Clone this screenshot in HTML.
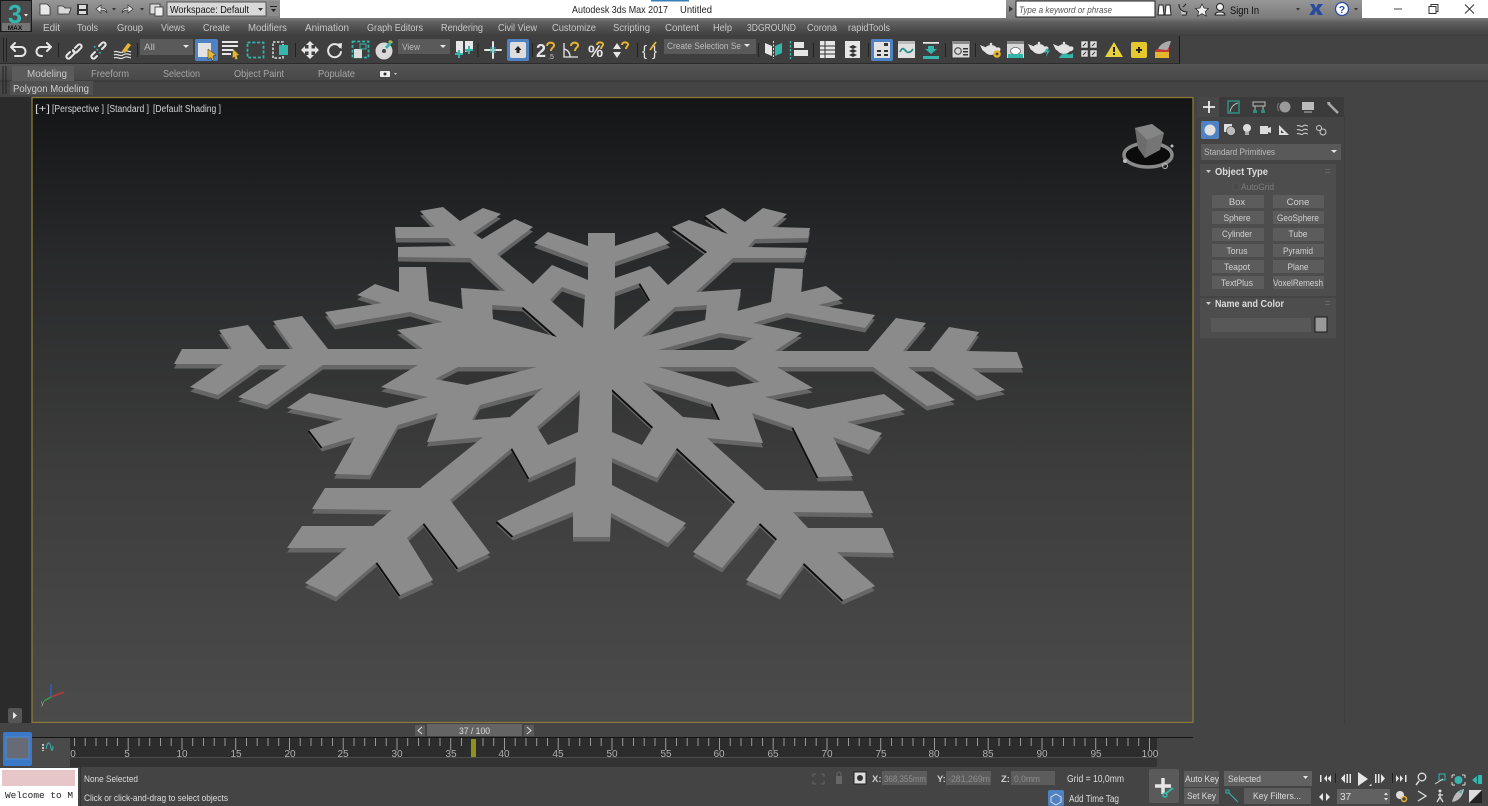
<!DOCTYPE html>
<html><head><meta charset="utf-8"><style>
html,body{margin:0;padding:0;background:#444;width:1488px;height:806px;overflow:hidden}
svg{display:block;position:absolute;left:0;top:0;filter:blur(.3px)}
text{font-family:"Liberation Sans",sans-serif;font-size:10px;fill:#d2d2d2}
.m text{font-size:10.5px;fill:#c8c8c8}
.c text{text-anchor:middle}
.tl text{fill:#b0b0b0}
.t{fill:none;stroke:#e6e6e6;stroke-width:2;stroke-linecap:round;stroke-linejoin:round}
.t2{fill:none;stroke:#e6e6e6;stroke-width:1.3}
.w{fill:#e6e6e6}
.g{fill:#35b5ac}
.y{fill:#e9b530}
.mg{fill:none;stroke:#e9b530;stroke-width:1.900}
</style></head><body>
<svg width="1488" height="806" viewBox="0 0 1488 806">
<defs>
<linearGradient id="vp" x1="0" y1="0" x2="0" y2="1"><stop offset="0" stop-color="#141516"/><stop offset=".25" stop-color="#28292a"/><stop offset=".6" stop-color="#3d3d3d"/><stop offset="1" stop-color="#4b4b4b"/></linearGradient>
<linearGradient id="mn" x1="0" y1="0" x2="0" y2="1"><stop offset="0" stop-color="#7a7a7a"/><stop offset=".25" stop-color="#5e5e5e"/><stop offset="1" stop-color="#3e3e3e"/></linearGradient>
<linearGradient id="tb" x1="0" y1="0" x2="0" y2="1"><stop offset="0" stop-color="#979797"/><stop offset="1" stop-color="#7b7b7b"/></linearGradient>
<linearGradient id="rb" x1="0" y1="0" x2="0" y2="1"><stop offset="0" stop-color="#545454"/><stop offset="1" stop-color="#474747"/></linearGradient>
<path id="sf" fill-rule="evenodd" d="M174,364 182,349 232,349 219,330 248,325 267,349 293,349 273,321 302,316 328,349 423,349 397,330 443,322 410,312 335,325 325,312 382,303 357,295 375,284 399,292 399,267 426,267 429,301 463,309 461,288 505,291 470,258 398,257 398,247 456,246 448,238 396,238 395,227 435,227 420,211 443,207 460,221 483,208 501,214 473,233 482,239 515,219 533,227 497,254 533,284 552,265 588,280 588,263 534,243 548,232 588,246 588,233 615,233 615,246 657,232 670,243 615,262 615,278 650,266 668,285 707,252 672,227 689,220 728,234 705,216 723,208 745,222 763,208 787,214 772,227 810,228 808,238 755,239 748,247 807,248 804,258 733,258 696,292 741,289 737,311 771,302 775,268 803,269 801,292 826,286 843,299 818,305 875,315 865,328 787,313 753,323 802,333 775,351 868,351 896,318 926,323 903,351 930,351 949,327 979,332 966,351 1017,352 1023,368 972,368 1005,390 977,396 933,367 908,367 955,400 927,406 873,367 777,367 813,388 765,397 808,409 884,394 905,410 847,422 882,433 869,450 833,437 853,476 818,477 793,427 752,413 763,443 707,438 765,490 863,491 873,513 793,512 808,528 883,528 894,553 837,552 875,586 843,600 804,563 780,595 746,580 777,539 760,523 722,568 693,552 735,502 677,448 657,478 612,458 612,485 686,523 668,543 611,513 610,537 573,537 573,512 513,536 497,521 575,485 576,457 529,478 512,448 450,500 490,553 458,568 424,523 407,538 433,580 400,595 377,562 336,597 305,583 347,548 287,548 302,526 373,526 392,510 312,509 325,488 420,488 483,437 427,442 438,413 398,425 370,475 334,474 355,437 322,447 309,430 343,419 287,408 309,393 386,408 428,397 381,387 418,365 323,365 267,405 238,397 287,365 260,365 218,395 190,387 223,364Z
M435,379 458,367 537,367 467,385Z M492,305 523,307 557,337 493,319Z M562,287 585,295 583,328 550,300Z M480,405 543,388 510,417 472,420Z M580,390 578,432 548,445 537,427Z M615,292 640,283 650,300 614,330Z M675,307 707,305 705,320 642,337Z M720,333 753,338 733,350 658,350Z M658,367 735,367 760,382 728,387Z M643,382 712,403 720,420 683,417Z M612,389 653,427 642,445 612,432Z"/>
<g id="pot"><ellipse cx="0" cy="0" rx="6.500" ry="5" fill="#e2e2e2"/><path d="M-5-2l-5-2 2 4 4 3zM6-2c4-1 4 3 0 4" fill="#e2e2e2" stroke="#e2e2e2"/><circle cy="-6" r="1.300" fill="#e2e2e2"/></g>
</defs>

<!-- Title bar -->
<rect width="1488" height="18" fill="#fff"/>
<rect x="0" y="18" width="1488" height="18" fill="url(#mn)"/>
<rect x="32" y="0" width="248" height="18" fill="url(#tb)"/>
<rect x="1006" y="0" width="356" height="18" fill="url(#tb)"/>
<rect x=".5" y=".5" width="31" height="31" fill="#4a4a4a" stroke="#1a1a1a"/>
<rect x="2" y="23" width="28" height="8" fill="#757575"/>
<text x="15" y="23" style="font-size:26px;font-weight:bold;fill:#33b8b0" text-anchor="middle" textLength="14" lengthAdjust="spacingAndGlyphs">3</text>
<text x="15" y="30" style="font-size:6.500px;font-weight:bold;fill:#111" text-anchor="middle">MAX</text>
<path d="M24 14h4l-2 2.500z" fill="#eee"/>
<rect x="167" y="2" width="99" height="14" fill="#d8d8d8" stroke="#555"/>
<text x="170" y="13" style="font-size:10.500px;fill:#111" textLength="79" lengthAdjust="spacingAndGlyphs">Workspace: Default</text>
<path d="M258 8l5 0-2.500 3z" fill="#333"/>
<rect x="268" y="1" width="11" height="15" fill="#8c8c8c"/><path d="M270 6h7v1h-7zM271 9h5l-2.500 3z" fill="#222"/>
<path d="M40 4h7l3 3v8H40z" fill="#e8e8e8" stroke="#333" stroke-width=".8"/>
<path d="M58 6h5l2 2h6l-2 6H58z" fill="#d8d8d8" stroke="#333" stroke-width=".8"/>
<path d="M77 4h11v11H77z" fill="#333"/><rect x="79" y="5" width="7" height="4" fill="#ddd"/><rect x="79" y="11" width="7" height="3" fill="#ddd"/>
<path d="M96 9l5-4v3c5 0 6 3 6 5-1-2-3-3-6-3v3z" fill="#e6e6e6" stroke="#333" stroke-width=".7"/>
<path d="M112 8h4l-2 2.500z" fill="#333"/>
<path d="M133 9l-5-4v3c-5 0-6 3-6 5 1-2 3-3 6-3v3z" fill="#e6e6e6" stroke="#333" stroke-width=".7"/>
<path d="M140 8h4l-2 2.500z" fill="#333"/>
<rect x="150" y="4" width="10" height="10" fill="#ddd" stroke="#333" stroke-width=".8"/><rect x="155" y="7" width="8" height="9" fill="#eee" stroke="#333" stroke-width=".8"/>

<text x="572" y="13" style="font-size:10.500px;fill:#222" textLength="96" lengthAdjust="spacingAndGlyphs">Autodesk 3ds Max 2017</text>
<text x="680" y="13" style="font-size:10.500px;fill:#222" textLength="32" lengthAdjust="spacingAndGlyphs">Untitled</text>
<rect x="651" y="0" width="38" height="1.500" fill="#3b7db5"/>

<rect x="1016" y="1" width="139" height="16" fill="#fff" stroke="#222"/>
<path d="M1009 6l4 3-4 3z" fill="#333"/>
<text x="1019" y="13" style="font-size:9.500px;font-style:italic;fill:#555" textLength="93" lengthAdjust="spacingAndGlyphs">Type a keyword or phrase</text>
<path d="M1159 5h4l1 10h-6zM1166 5h4l1 10h-6z" fill="#fff" stroke="#222"/>
<path d="M1179 4c0 5 3 8 8 8l-1 3h-4M1183 7l3-3" fill="#ccc" stroke="#222"/>
<path d="M1202 4l2 4 4.500.5-3.200 3 1 4.500-4.300-2.300-4.300 2.300 1-4.500-3.200-3 4.500-.5z" fill="#eee" stroke="#222" stroke-width=".7"/>
<circle cx="1220" cy="7" r="3.500" fill="#eee" stroke="#222"/><path d="M1215 15c0-4 10-4 10 0z" fill="#eee" stroke="#222"/>
<text x="1230" y="14" style="font-size:11px;fill:#111" textLength="29" lengthAdjust="spacingAndGlyphs">Sign In</text>
<path d="M1296 8h4l-2 2.500z" fill="#333"/>
<path d="M1310 4h4l2 4 2-4h5l-4 5 4 6h-5l-2-4-2 4h-5l4-6z" fill="#274b9e"/>
<circle cx="1342" cy="9" r="6.500" fill="#fff" stroke="#2a4b9e" stroke-width="1.300"/><text x="1342" y="13" text-anchor="middle" style="font-size:10.500px;font-weight:bold;fill:#2a4b9e">?</text>
<path d="M1354 8h4l-2 2.500z" fill="#333"/>
<rect x="1394" y="8.500" width="8" height="1" fill="#444"/>
<path d="M1429 6.500h7v7h-7zM1431 6.500V4.500h7v7h-2" fill="none" stroke="#333"/>
<path d="M1465 4.500l9 9m0-9l-9 9" stroke="#333" fill="none"/>

<!-- Menu -->
<g class="m">
<text x="43" y="31" textLength="17" lengthAdjust="spacingAndGlyphs">Edit</text><text x="77" y="31" textLength="21" lengthAdjust="spacingAndGlyphs">Tools</text><text x="117" y="31" textLength="26" lengthAdjust="spacingAndGlyphs">Group</text><text x="161" y="31" textLength="24" lengthAdjust="spacingAndGlyphs">Views</text><text x="203" y="31" textLength="27" lengthAdjust="spacingAndGlyphs">Create</text><text x="248" y="31" textLength="39" lengthAdjust="spacingAndGlyphs">Modifiers</text><text x="305" y="31" textLength="44" lengthAdjust="spacingAndGlyphs">Animation</text><text x="367" y="31" textLength="56" lengthAdjust="spacingAndGlyphs">Graph Editors</text><text x="441" y="31" textLength="42" lengthAdjust="spacingAndGlyphs">Rendering</text><text x="498" y="31" textLength="39" lengthAdjust="spacingAndGlyphs">Civil View</text><text x="552" y="31" textLength="44" lengthAdjust="spacingAndGlyphs">Customize</text><text x="613" y="31" textLength="37" lengthAdjust="spacingAndGlyphs">Scripting</text><text x="665" y="31" textLength="34" lengthAdjust="spacingAndGlyphs">Content</text><text x="713" y="31" textLength="19" lengthAdjust="spacingAndGlyphs">Help</text><text x="747" y="31" textLength="49" lengthAdjust="spacingAndGlyphs">3DGROUND</text><text x="807" y="31" textLength="30" lengthAdjust="spacingAndGlyphs">Corona</text><text x="848" y="31" textLength="42" lengthAdjust="spacingAndGlyphs">rapidTools</text>
</g>

<!-- Toolbar -->
<rect x="0" y="36" width="1180" height="28" fill="#3f3f3f"/>
<rect x="1180" y="36" width="308" height="28" fill="#434343"/>
<rect x="0" y="63.500" width="1180" height="1" fill="#1a1a1a"/><rect x="1179" y="36" width="1" height="28" fill="#1a1a1a"/>
<rect x="3" y="38" width="1" height="24" fill="#222"/><rect x="6" y="38" width="1" height="24" fill="#222"/>

<path class="t" d="M13 47h8c6 0 6 9 0 9h-6M15 43l-4 4 4 4"/>
<path class="t" d="M49 47h-8c-6 0-6 9 0 9h1M47 43l4 4-4 4"/>
<path d="M58.500 43v14M137.500 43v14M295.500 43v14M478 43v14M532.500 43v14M637.500 43v14M758.500 43v14M813.500 43v14M868.500 43v14M945.500 43v14M975.500 43v14" stroke="#222"/>
<path class="t" d="M70 52l-3 3c-2 2 1 5 3 3l4-4c2-2-1-4-1-4M75 48l3-3c2-2 5 1 3 3l-4 4c-2 2-4-1-4-1" stroke-width="1.700"/>
<path class="t" d="M95 52l-3 3c-2 2 1 5 3 3l2-2M99 46l3-3c2-2 5 1 3 3l-3 3" stroke-width="1.700"/><path d="M94 46l8 9" stroke="#35b5ac" stroke-width="1.500" stroke-dasharray="2 2"/>
<path d="M114 52c3-2 6 2 9 0s5-1 8 0M114 55c3-2 6 2 9 0s5-1 8 0M114 58c3-2 6 2 9 0s5-1 8 0" fill="none" stroke="#ddd" stroke-width="1.200"/><path d="M122 51l6-8 3 2-6 8z" class="y"/>

<rect x="140" y="39" width="53" height="16" fill="#5a5a5a"/><text x="144" y="50" style="fill:#bbb;font-size:9.500px" textLength="11" lengthAdjust="spacingAndGlyphs">All</text><path class="w" d="M183 45h6l-3 3z"/>
<rect x="195" y="39" width="23" height="22" rx="2" fill="#4f82c2"/><rect x="198" y="43" width="13" height="14" fill="#e2e2e2"/><path d="M208 49l8 6-3 1 1 4-2 .5-1-3-3 2z" class="y" stroke="#222" stroke-width=".5"/>
<path d="M222 41h16v2h-16zM222 45h16v2h-16zM222 49h11v2h-11zM222 53h9v2h-9z" class="w"/><path d="M233 49l6 6-2.500.5 1 3.500-2 .5-1-3-2 1.500z" class="y"/>
<rect x="247.500" y="42.500" width="16" height="15" fill="none" stroke="#35b5ac" stroke-width="1.800" stroke-dasharray="3 1.800"/>
<rect x="273" y="42" width="10" height="16" fill="none" stroke="#ddd" stroke-width="1.500" stroke-dasharray="2.500 1.500"/><rect x="279" y="45" width="9" height="10" class="g"/>
<path class="w" d="M310 41l4 4h-2.500v3.500H315V46l4 4-4 4v-2.500h-3.500V55H314l-4 4-4-4h2.500v-3.500H305V54l-4-4 4-4v2.500h3.500V45H306z"/>
<path class="t" d="M340 47a6.500 6.500 0 1 0 1 5"/><path class="w" d="M336 44l6-1-.5 6z"/>
<rect x="352.500" y="41.500" width="16" height="16" fill="none" stroke="#35b5ac" stroke-width="1.800" stroke-dasharray="3 1.800"/><rect x="354" y="49" width="8" height="9" fill="#ddd"/><rect x="360" y="44" width="6" height="5" fill="none" stroke="#35b5ac"/>
<circle cx="384" cy="51" r="8.500" fill="#d9d9d9"/><circle cx="384" cy="51" r="2" fill="#444"/><path d="M385 47l6-7 2 2-6 7z" fill="#35b5ac"/><path d="M388 42l2-2 3 3" class="y"/>
<rect x="398" y="39" width="52" height="15" fill="#5a5a5a"/><text x="402" y="50" style="fill:#bbb;font-size:9.500px" textLength="18" lengthAdjust="spacingAndGlyphs">View</text><path class="w" d="M440 45h6l-3 3z"/>
<path class="w" d="M456 41h7v13l-7-2zM465 41h8v9l-8 2z"/><path d="M459 50v8M455 54h8M469 46v8M465 50h8" stroke="#35b5ac" stroke-width="2"/>
<path class="t" d="M485 50h16M493 42v16" stroke-width="1.800"/><rect x="490" y="47" width="6" height="6" class="g" opacity=".5"/>
<rect x="507" y="39" width="22" height="22" rx="2" fill="#4f82c2"/><rect x="510" y="42" width="16" height="16" rx="2" fill="#ddd"/><path d="M518 46l3.500 4h-2v3h-3v-3h-2z" fill="#222"/>
<text x="536" y="57" style="font-size:18px;font-weight:bold;fill:#e6e6e6">2</text><text x="548" y="59" style="font-size:7px;fill:#ccc">.5</text><path class="mg" d="M547 46c0-5 8-4 7 0-1 2-3 2-3 5"/>
<path class="t2" d="M564 43v14h14M564 49c4 1 6 4 6 8"/><path class="mg" d="M571 46c0-5 8-4 7 0-1 2-3 2-3 5"/>
<text x="588" y="57" style="font-size:17px;font-weight:bold;fill:#e6e6e6">%</text><path class="mg" d="M597 45c0-4 7-3 6 0-1 2-2 2-2 4"/>
<path class="w" d="M613 49l4-6 4 6zM613 52l4 6 4-6z"/><path class="mg" d="M622 45c0-4 7-3 6 0-1 2-2 2-2 4"/>
<text x="642" y="56" style="font-size:15px;fill:#e6e6e6">{</text><text x="652" y="56" style="font-size:15px;fill:#e6e6e6">}</text><path d="M650 50l6-8" stroke="#e9b530" stroke-width="1.800"/>
<rect x="664" y="39" width="92" height="15" fill="#5a5a5a"/><text x="667" y="49" style="fill:#bbb;font-size:9.500px" textLength="74" lengthAdjust="spacingAndGlyphs">Create Selection Se</text><path class="w" d="M744 44h6l-3 3z"/>
<path d="M765 43l7 3v10l-7-3z" class="w"/><path d="M782 43l-7 3v10l7-3z" class="g"/><path d="M773.500 41v18" stroke="#ddd" stroke-dasharray="2 1.500"/>
<path d="M790.500 41v18" stroke="#35b5ac" stroke-width="1.500" stroke-dasharray="2.500 1.500"/><rect x="794" y="42" width="10" height="6" class="w"/><rect x="794" y="50" width="14" height="6" class="w"/>
<rect x="820" y="41" width="15" height="17" fill="#e6e6e6"/><path d="M820 46h15M820 50h15M820 54h15M825 41v17" stroke="#333"/>
<rect x="845" y="41" width="15" height="17" fill="#e6e6e6"/><path d="M849 47l4-2 4 2-4 2zM849 51l4-2 4 2-4 2zM849 55l4-2 4 2-4 2z" fill="#333"/>
<rect x="871" y="39" width="22" height="22" rx="2" fill="#4f82c2"/><rect x="874" y="42" width="16" height="16" fill="#e2e2e2"/><path d="M877 50h4v2h-4zM884 50h4v2h-4zM877 54h4v2h-4zM884 54h4v2h-4zM884 43h4v3h-4z" fill="#333"/>
<rect x="898" y="41" width="17" height="17" fill="#e0e0e0"/><rect x="898" y="41" width="17" height="3" fill="#bbb"/><path d="M900 52c3-7 5-1 7 0s4 0 6-3" fill="none" stroke="#268f88" stroke-width="1.800"/>
<path d="M923 42h16v1.800h-16zM923 56h16v2.500h-16z" class="w"/><path d="M928 46h6v3h3l-6 5-6-5h3z" fill="#35b5ac"/><rect x="923" y="56" width="16" height="3" class="g"/>
<rect x="952" y="41" width="18" height="17" fill="#d8d8d8" stroke="#333"/><rect x="952" y="41" width="18" height="3" fill="#888"/><circle cx="958" cy="51" r="3.300" fill="none" stroke="#333"/><path d="M963 48h5v1.500h-5zM963 51h5v1.500h-5zM963 54h5v1.500h-5z" fill="#333"/>
<use href="#pot" transform="translate(991,50)"/><circle cx="997" cy="54" r="3.800" class="y"/><circle cx="997" cy="54" r="1.400" fill="#444"/>
<rect x="1007" y="41" width="17" height="17" fill="#d8d8d8"/><rect x="1007" y="41" width="17" height="3" fill="#888"/><ellipse cx="1015.500" cy="51" rx="5" ry="3.500" fill="#fff" stroke="#333" stroke-width=".6"/><path d="M1008 54h15v4h-15z" class="g"/>
<use href="#pot" transform="translate(1039,49)"/><path d="M1046 49l3-1-2 3 3-1-4 7 1-5-3 1z" fill="#35b5ac"/>
<use href="#pot" transform="translate(1064,49)"/><path d="M1059 58c2-4 5-5 8-4s5 0 6-1v5z" class="g"/>
<path d="M1081 41h7v7h-7zM1090 41h7v7h-7zM1081 50h7v7h-7zM1090 50h7v7h-7z" fill="#ddd" stroke="#333" stroke-width=".5"/><path d="M1083 46l3-3M1092 46l3-3M1083 55l3-3M1092 55l3-3" stroke="#333"/>
<path d="M1114 42l9 15h-18z" fill="#e8d23a"/><path d="M1113 47h2v5h-2zM1113 53h2v2h-2z" fill="#222"/>
<rect x="1131" y="42" width="16" height="16" rx="2" fill="#e4c92e"/><path d="M1136 50h6M1139 47v6" stroke="#222" stroke-width="2"/>
<path d="M1155 50l14-3v11h-14z" fill="#c33d36"/><path d="M1155 52h14v6h-14z" fill="#e4b52e"/><path d="M1158 49c2-5 8-8 13-8-1 3-2 7-4 9z" fill="#aaa"/>

<!-- Ribbon -->
<rect x="0" y="64" width="1488" height="17" fill="url(#rb)"/>
<rect x="0" y="81" width="1488" height="16" fill="#444"/>
<rect x="0" y="80.500" width="1488" height="1" fill="#333"/>
<rect x="12" y="66" width="62" height="15" fill="#5b5b5b"/>
<rect x="10" y="81" width="83" height="14" fill="#505050"/>
<path d="M3 66v28M6 66v28" stroke="#222"/>
<rect x="1" y="98" width="29" height="1" fill="#222"/>
<g class="m">
<text x="27" y="77" style="fill:#c8c8c8" textLength="40" lengthAdjust="spacingAndGlyphs">Modeling</text><text x="91" y="77" style="fill:#a5a5a5" textLength="38" lengthAdjust="spacingAndGlyphs">Freeform</text><text x="163" y="77" style="fill:#a5a5a5" textLength="37" lengthAdjust="spacingAndGlyphs">Selection</text><text x="234" y="77" style="fill:#a5a5a5" textLength="50" lengthAdjust="spacingAndGlyphs">Object Paint</text><text x="318" y="77" style="fill:#a5a5a5" textLength="37" lengthAdjust="spacingAndGlyphs">Populate</text><text x="13" y="92" style="fill:#cfcfcf" textLength="76" lengthAdjust="spacingAndGlyphs">Polygon Modeling</text>
</g>
<rect x="380" y="71" width="10" height="6" rx="1" fill="#eee"/><circle cx="385" cy="74" r="1.500" fill="#333"/><path d="M394 73h3l-1.500 2z" fill="#ccc"/>

<!-- Left strip + viewport -->
<rect x="0" y="97" width="32" height="640" fill="#2b2b2b"/>
<rect x="8" y="708" width="14" height="15" rx="2" fill="#555"/><path class="w" d="M13 712l4 3.500-4 3.500z"/>
<rect x="32" y="97.500" width="1161" height="625" fill="url(#vp)" stroke="#8b7a38" stroke-width="1.300"/>
<text x="35" y="112" style="font-size:10px;fill:#d4d4d4" textLength="15" lengthAdjust="spacingAndGlyphs">[+]</text>
<text x="52" y="112" style="font-size:10px;fill:#d4d4d4" textLength="52" lengthAdjust="spacingAndGlyphs">[Perspective ]</text>
<text x="107" y="112" style="font-size:10px;fill:#d4d4d4" textLength="42" lengthAdjust="spacingAndGlyphs">[Standard ]</text>
<text x="153" y="112" style="font-size:10px;fill:#d4d4d4" textLength="68" lengthAdjust="spacingAndGlyphs">[Default Shading ]</text>

<!-- Snowflake -->
<use href="#sf" fill="#666" transform="translate(0,4.500)"/>
<g fill="none" stroke="#0e0e0e" stroke-width="2" transform="translate(-.5,.9)">
<path d="M424,523 458,568M377,562 400,595M497,521 513,536M512,448 529,478M309,430 322,447M677,448 735,502M804,563 843,600M760,523 777,539M793,427 818,477M712,403 720,420M612,389 653,427M523,307 557,337M672,227 707,252M705,216 728,234M640,283 650,300"/>
</g>
<use href="#sf" fill="#8b8b8b"/>

<!-- ViewCube -->
<ellipse cx="1148" cy="155" rx="24" ry="12" fill="#0b0b0b" stroke="#8a8a8a" stroke-width="3.500"/>
<path d="M1135 128l17-4 12 9-4 17-15 8-7-10z" fill="#757575"/><path d="M1135 128l17-4 12 9-17 7z" fill="#858585"/><path d="M1147 140l-2 18-7-10-3-20z" fill="#6c6c6c"/>
<circle cx="1125" cy="161" r="2" fill="#bbb"/><circle cx="1165" cy="166" r="2.500" fill="none" stroke="#bbb"/><circle cx="1172" cy="146" r="1.500" fill="#bbb"/>

<!-- Axis -->
<path d="M51 697v-13" stroke="#2a5fbf" stroke-width="1.500"/><path d="M51 697l13-5" stroke="#b83a3a" stroke-width="1.500"/><path d="M51 697l-7 4" stroke="#3a9a4a" stroke-width="1.500"/>
<text x="41" y="705" style="font-size:6px;fill:#aaa">y</text>

<!-- Command panel -->
<rect x="1194" y="97" width="294" height="640" fill="#444"/>
<rect x="1197" y="97" width="147" height="20" fill="#3b3b3b"/>
<rect x="1197" y="97" width="22" height="20" fill="#484848"/>
<rect x="1344" y="117" width="144" height="620" fill="#444"/><path d="M1344.500 117v620" stroke="#3d3d3d"/>
<path d="M1203 107h12M1209 101v12" stroke="#eee" stroke-width="1.800"/>
<rect x="1228" y="101" width="11" height="12" fill="none" stroke="#2f8f7f" stroke-width="1.500"/><path d="M1230 112c1-5 4-8 8-9" stroke="#bbb" fill="none"/>
<path d="M1253 102h12v4h-12zM1255 106v4M1263 106v4" fill="none" stroke="#bbb"/><rect x="1253" y="110" width="4" height="3" fill="#2f8f7f"/><rect x="1261" y="110" width="4" height="3" fill="#2f8f7f"/>
<circle cx="1285" cy="107" r="5.500" fill="#999"/><path d="M1279 103a6 6 0 0 0 0 8" stroke="#666" fill="none" stroke-width="1.500"/>
<rect x="1302" y="102" width="12" height="8" fill="#bbb"/><path d="M1304 112h8" stroke="#bbb"/>
<path d="M1328 103l10 10" stroke="#aaa" stroke-width="2.500"/><path d="M1327 102l3 0 1 3-3 0z" fill="#aaa"/>
<rect x="1201" y="121" width="18" height="18" rx="2" fill="#4f82c2"/><circle cx="1210" cy="130" r="5.500" fill="#e0e0e0"/>
<rect x="1224" y="124" width="8" height="8" fill="#ddd"/><circle cx="1231" cy="131" r="4.500" fill="#bbb" stroke="#333" stroke-width=".6"/>
<circle cx="1247" cy="128" r="4" fill="#ddd"/><rect x="1245" y="132" width="4" height="3" fill="#aaa"/>
<rect x="1260" y="126" width="8" height="8" fill="#ddd"/><path d="M1268 128l3-1v6l-3-1z" fill="#ddd"/>
<path d="M1279 125v10h10l-10-10zM1281 130v3h3z" fill="#ddd" fill-rule="evenodd"/>
<path d="M1297 126c2-2 4 2 6 0s4 0 5 0M1297 130c2-2 4 2 6 0s4 0 5 0M1297 134c2-2 4 2 6 0s4 0 5 0" stroke="#ccc" fill="none"/>
<circle cx="1319" cy="128" r="2.500" fill="none" stroke="#ccc"/><circle cx="1323" cy="132" r="3" fill="none" stroke="#ccc"/>
<rect x="1201" y="144" width="140" height="16" fill="#595959"/><text x="1204" y="155" style="font-size:9.500px;fill:#bcbcbc" textLength="71" lengthAdjust="spacingAndGlyphs">Standard Primitives</text><path class="w" d="M1331 150h6l-3 3z"/>
<rect x="1200" y="164" width="136" height="132" fill="#4d4d4d"/><rect x="1200" y="298" width="136" height="40" fill="#4d4d4d"/>
<path d="M1206 170h5l-2.500 3z" fill="#ccc"/><path d="M1206 302h5l-2.500 3z" fill="#ccc"/>
<text x="1215" y="175" style="font-weight:bold;font-size:10.500px;fill:#dcdcdc" textLength="53" lengthAdjust="spacingAndGlyphs">Object Type</text>
<text x="1215" y="307" style="font-weight:bold;font-size:10.500px;fill:#dcdcdc" textLength="69" lengthAdjust="spacingAndGlyphs">Name and Color</text>
<path d="M1325 169h5v1h-5zM1325 172h5v1h-5z" fill="#666"/><path d="M1325 301h5v1h-5zM1325 304h5v1h-5z" fill="#666"/>
<rect x="1233" y="183" width="6" height="7" fill="#4a4a4a" stroke="#555"/><text x="1241" y="190" style="font-size:9.500px;fill:#7d7d7d" textLength="33" lengthAdjust="spacingAndGlyphs">AutoGrid</text>
<g fill="#5c5c5c">
<rect x="1212" y="195" width="52" height="13"/><rect x="1273" y="195" width="51" height="13"/>
<rect x="1212" y="211" width="52" height="13"/><rect x="1273" y="211" width="51" height="13"/>
<rect x="1212" y="228" width="52" height="13"/><rect x="1273" y="228" width="51" height="13"/>
<rect x="1212" y="244" width="52" height="13"/><rect x="1273" y="244" width="51" height="13"/>
<rect x="1212" y="260" width="52" height="13"/><rect x="1273" y="260" width="51" height="13"/>
<rect x="1212" y="276" width="52" height="13"/><rect x="1273" y="276" width="51" height="13"/>
</g>
<g class="c">
<text x="1237" y="205" style="font-size:9.500px">Box</text><text x="1298" y="205" style="font-size:9.500px">Cone</text>
<text x="1237" y="221" style="font-size:9.500px" textLength="27" lengthAdjust="spacingAndGlyphs">Sphere</text><text x="1298" y="221" style="font-size:9.500px" textLength="42" lengthAdjust="spacingAndGlyphs">GeoSphere</text>
<text x="1237" y="237" style="font-size:9.500px" textLength="30" lengthAdjust="spacingAndGlyphs">Cylinder</text><text x="1298" y="237" style="font-size:9.500px" textLength="19" lengthAdjust="spacingAndGlyphs">Tube</text>
<text x="1237" y="254" style="font-size:9.500px" textLength="21" lengthAdjust="spacingAndGlyphs">Torus</text><text x="1298" y="254" style="font-size:9.500px" textLength="30" lengthAdjust="spacingAndGlyphs">Pyramid</text>
<text x="1237" y="270" style="font-size:9.500px" textLength="26" lengthAdjust="spacingAndGlyphs">Teapot</text><text x="1298" y="270" style="font-size:9.500px" textLength="21" lengthAdjust="spacingAndGlyphs">Plane</text>
<text x="1237" y="286" style="font-size:9.500px" textLength="32" lengthAdjust="spacingAndGlyphs">TextPlus</text><text x="1298" y="286" style="font-size:9.500px" textLength="50" lengthAdjust="spacingAndGlyphs">VoxelRemesh</text>
</g>
<rect x="1211" y="318" width="100" height="14" fill="#585858"/>
<rect x="1315" y="317" width="12" height="15" fill="#999" stroke="#1a1a1a"/>

<!-- Time slider -->
<rect x="0" y="723" width="1488" height="14" fill="#444"/>
<rect x="415" y="725" width="10" height="11" fill="#5a5a5a"/><path d="M422 727l-4 3.500 4 3.500" fill="none" stroke="#ddd"/>
<rect x="427" y="724" width="95" height="12" fill="#646464"/><text x="474.500" y="734" text-anchor="middle" style="font-size:9.500px;fill:#ddd" textLength="31" lengthAdjust="spacingAndGlyphs">37 / 100</text>
<rect x="524" y="725" width="10" height="11" fill="#5a5a5a"/><path d="M527 727l4 3.500-4 3.500" fill="none" stroke="#ddd"/>

<!-- Trackbar -->
<rect x="0" y="723" width="32" height="44" fill="#444"/>
<rect x="3" y="732" width="29" height="34" rx="2" fill="#3a78c8"/><rect x="6" y="737" width="23" height="22" fill="#666b75" stroke="#4a88d8"/>
<rect x="32" y="737" width="38" height="30" fill="#4a4a4a"/>
<path d="M43 744v7" stroke="#eee" stroke-dasharray="2 1" stroke-width="1.500"/><path d="M46 749c2-10 4-6 5-1s2 1 2-2" fill="none" stroke="#35b5ac"/>
<rect x="70" y="737" width="1087" height="30" fill="#2c2c2c"/>
<rect x="32" y="737" width="1161" height="1" fill="#141414"/>
<rect x="70" y="757" width="1087" height="1" fill="#4c4c4c"/>
<rect x="70" y="758" width="1087" height="9" fill="#333"/>
<g stroke="#9a9a9a">
<path d="M74.500 738v8M85.200 738v8M96 738v8M106.700 738v8M117.500 738v8M128.200 738v12M139 738v8M149.700 738v8M160.500 738v8M171.200 738v8M182 738v12M192.700 738v8M203.500 738v8M214.200 738v8M225 738v8M235.700 738v12M246.500 738v8M257.200 738v8M268 738v8M278.700 738v8M289.500 738v12M300.200 738v8M311 738v8M321.700 738v8M332.500 738v8M343.200 738v12M354 738v8M364.700 738v8M375.500 738v8M386.200 738v8M397 738v12M407.700 738v8M418.500 738v8M429.200 738v8M440 738v8M450.700 738v12M461.500 738v8M483 738v8M493.700 738v8M504.500 738v12M515.200 738v8M526 738v8M536.700 738v8M547.500 738v8M558.200 738v12M569 738v8M579.700 738v8M590.500 738v8M601.200 738v8M612 738v12M622.700 738v8M633.500 738v8M644.200 738v8M655 738v8M665.700 738v12M676.500 738v8M687.200 738v8M698 738v8M708.700 738v8M719.500 738v12M730.200 738v8M741 738v8M751.700 738v8M762.500 738v8M773.200 738v12M784 738v8M794.700 738v8M805.500 738v8M816.200 738v8M827 738v12M837.700 738v8M848.500 738v8M859.200 738v8M870 738v8M880.700 738v12M891.500 738v8M902.200 738v8M913 738v8M923.700 738v8M934.500 738v12M945.200 738v8M956 738v8M966.700 738v8M977.500 738v8M988.200 738v12M999 738v8M1009.700 738v8M1020.500 738v8M1031.200 738v8M1042 738v12M1052.700 738v8M1063.500 738v8M1074.200 738v8M1085 738v8M1095.700 738v12M1106.500 738v8M1117.200 738v8M1128 738v8M1138.700 738v8M1149.500 738v12"/>
</g>
<rect x="471" y="739" width="5" height="18" fill="#8f8f1e"/>
<g class="c tl"><text x="73" y="757">0</text><text x="127" y="757">5</text><text x="182" y="757">10</text><text x="236" y="757">15</text><text x="290" y="757">20</text><text x="343" y="757">25</text><text x="397" y="757">30</text><text x="451" y="757">35</text><text x="504" y="757">40</text><text x="558" y="757">45</text><text x="612" y="757">50</text><text x="666" y="757">55</text><text x="719" y="757">60</text><text x="773" y="757">65</text><text x="827" y="757">70</text><text x="881" y="757">75</text><text x="934" y="757">80</text><text x="988" y="757">85</text><text x="1042" y="757">90</text><text x="1096" y="757">95</text><text x="1150" y="757">100</text></g>

<!-- Status bar -->
<rect x="0" y="767" width="1488" height="39" fill="#444"/>
<rect x="0" y="768" width="78" height="38" fill="#fff"/>
<rect x="2" y="770" width="73" height="16" fill="#e6c6c8"/>
<text x="5" y="798" style="font-family:'Liberation Mono',monospace;font-size:9.500px;fill:#222" textLength="68" lengthAdjust="spacingAndGlyphs">Welcome to M</text>
<rect x="80" y="767" width="1" height="39" fill="#333"/>
<text x="84" y="782" style="font-size:9.500px;fill:#ddd" textLength="54" lengthAdjust="spacingAndGlyphs">None Selected</text>
<text x="84" y="801" style="font-size:9.500px;fill:#ddd" textLength="144" lengthAdjust="spacingAndGlyphs">Click or click-and-drag to select objects</text>
<path d="M813 774h3M821 774h3M813 784h3M821 784h3M813 774v3M824 774v3M813 781v3M824 781v3" stroke="#666" fill="none"/><rect x="836" y="776" width="6" height="8" fill="#666"/><path d="M837 776v-2a2 2 0 0 1 4 0v2" fill="none" stroke="#666"/>
<rect x="854" y="772" width="12" height="12" fill="#ddd" stroke="#222"/><circle cx="860" cy="778" r="3" fill="#333"/>
<text x="872" y="782" style="font-weight:bold;fill:#ccc;font-size:9.500px">X:</text><rect x="882" y="771" width="45" height="14" fill="#5c5c5c"/><text x="884" y="782" style="fill:#8d8d8d;font-size:9.500px" textLength="42" lengthAdjust="spacingAndGlyphs">368,355mm</text>
<text x="937" y="782" style="font-weight:bold;fill:#ccc;font-size:9.500px">Y:</text><rect x="946" y="771" width="45" height="14" fill="#5c5c5c"/><text x="948" y="782" style="fill:#8d8d8d;font-size:9.500px" textLength="42" lengthAdjust="spacingAndGlyphs">-281,269m</text>
<text x="1001" y="782" style="font-weight:bold;fill:#ccc;font-size:9.500px">Z:</text><rect x="1011" y="771" width="44" height="14" fill="#5c5c5c"/><text x="1014" y="782" style="fill:#8d8d8d;font-size:9.500px" textLength="26" lengthAdjust="spacingAndGlyphs">0,0mm</text>
<text x="1067" y="782" style="fill:#ddd;font-size:10px" textLength="57" lengthAdjust="spacingAndGlyphs">Grid = 10,0mm</text>
<rect x="1048" y="790" width="16" height="16" rx="2" fill="#4f82c2"/><path d="M1056 794l5 3v5l-5 3-5-3v-5z" fill="none" stroke="#ddd"/>
<text x="1069" y="802" style="font-size:10px;fill:#ddd" textLength="50" lengthAdjust="spacingAndGlyphs">Add Time Tag</text>

<rect x="1149" y="769" width="30" height="34" rx="2" fill="#5a5a5a"/><path d="M1155 786h16M1163 778v16" stroke="#e6e6e6" stroke-width="3.500"/><path d="M1165 794l8-6" stroke="#35b5ac" stroke-width="2"/><circle cx="1165" cy="795" r="2" fill="none" stroke="#35b5ac" stroke-width="1.500"/>
<rect x="1184" y="771" width="35" height="16" rx="1" fill="#5c5c5c"/><text x="1185" y="782" style="fill:#ddd;font-size:9.500px" textLength="34" lengthAdjust="spacingAndGlyphs">Auto Key</text>
<rect x="1184" y="788" width="35" height="16" rx="1" fill="#5c5c5c"/><text x="1187" y="799" style="fill:#ddd;font-size:9.500px" textLength="29" lengthAdjust="spacingAndGlyphs">Set Key</text>
<rect x="1224" y="771" width="88" height="15" fill="#616161"/><text x="1228" y="782" style="fill:#d6d6d6;font-size:9.500px" textLength="33" lengthAdjust="spacingAndGlyphs">Selected</text><path class="w" d="M1303 776h5l-2.500 3z"/>
<path d="M1226 790h3v3h-3zM1229 793l9 9" fill="none" stroke="#35b5ac"/>
<rect x="1244" y="788" width="67" height="16" rx="1" fill="#5c5c5c"/><text x="1253" y="799" style="fill:#ddd;font-size:9.500px" textLength="48" lengthAdjust="spacingAndGlyphs">Key Filters...</text>
<path class="w" d="M1320 775h1.500v7H1320zM1327 775v7l-3-3.500zM1331 775v7l-3.500-3.500z"/>
<path class="w" d="M1345 774v9l-4-4.500zM1346.500 774h1.500v9h-1.500zM1349.500 774h1.500v9h-1.500z"/>
<path class="w" d="M1358 772l10 7-10 7z"/><path d="M1369 786h2.500v-2.500z" fill="#ddd"/>
<path class="w" d="M1375 774h1.500v9H1375zM1378 774h1.500v9H1378zM1381 774l4 4.500-4 4.500z"/>
<path class="w" d="M1396 775v7l3-3.500zM1400 775v7l3-3.500zM1405 775h1.500v7h-1.500z"/>
<path d="M1335.500 773v10M1392.500 773v10" stroke="#222"/>
<circle cx="1422" cy="777" r="3.800" fill="none" stroke="#ddd" stroke-width="1.300"/><path d="M1419 781l-3 4" stroke="#ddd" stroke-width="1.500"/>
<rect x="1439" y="774" width="6" height="6" fill="none" stroke="#35b5ac"/><path d="M1435 784l8-5" stroke="#ddd"/>
<path d="M1452 775h3M1462 775h3M1452 785h3M1462 785h3M1452 775v3M1465 775v3M1452 782v3M1465 782v3" stroke="#ddd" fill="none"/><circle cx="1458.500" cy="780" r="4" class="g"/>
<path d="M1472 780l5-4v8zM1478 775h4v9h-4z" class="g"/>
<path class="w" d="M1323 793v8l-4-4zM1326 793l4 4-4 4z"/>
<rect x="1337" y="789" width="53" height="15" fill="#616161"/><text x="1340" y="800" style="font-size:10px;fill:#ddd">37</text><path class="w" d="M1384 795h4l-2-2.500zM1384 798h4l-2 2.500z"/>
<circle cx="1400" cy="795" r="4" fill="#ddd"/><circle cx="1404" cy="799" r="2.500" fill="none" stroke="#e9b530" stroke-width="1.500"/>
<path d="M1418 791l8 5-8 5" fill="none" stroke="#ddd" stroke-width="1.300"/>
<circle cx="1440" cy="791" r="1.500" fill="#ddd"/><path d="M1440 793v4l-3 5m3-5l3 5m-5-7h5" fill="none" stroke="#ddd" stroke-width="1.300"/>
<path d="M1452 802c2-8 6-12 12-13-1 7-5 12-12 13z" fill="#bbb"/><path d="M1459 792l4-3-2 5z" fill="#35b5ac"/>
<rect x="1469" y="790" width="13" height="13" fill="#ddd"/><path d="M1469 803l13-13v13z" fill="#222"/>
</svg>
</body></html>
